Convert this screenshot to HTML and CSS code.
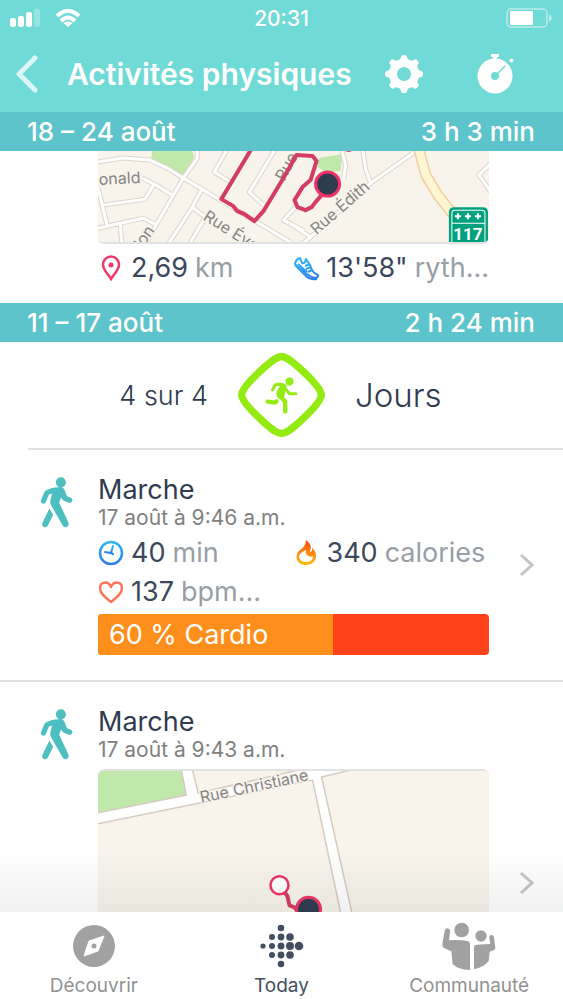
FILE: index.html
```html
<!DOCTYPE html>
<html lang="fr">
<head>
  <meta charset="UTF-8">
  <meta name="viewport" content="width=device-width, initial-scale=1">
  <title>Activités physiques</title>
  <link rel="stylesheet" href="styles.css">
</head>
<body>
  <svg class="defs" width="0" height="0" aria-hidden="true">
    <defs>
      <linearGradient id="blue" x1="0" y1="0" x2="0" y2="1">
        <stop offset="0" stop-color="#2fb4f8"/>
        <stop offset="1" stop-color="#2a7de8"/>
      </linearGradient>
      <linearGradient id="fire" x1="0" y1="0" x2="0" y2="1">
        <stop offset="0" stop-color="#fb4a12"/>
        <stop offset="1" stop-color="#ffbe0a"/>
      </linearGradient>
      <symbol id="walk" viewBox="60 48 98 152">
        <circle cx="122" cy="64" r="15"/>
        <path d="M98 80 L122 78 Q130 79 134 88 L140 105 L152 110 Q159 114 155 121 Q153 126 146 125 L131 119 Q127 117 123 109 L117 124 L144 183 Q148 193 140 197 Q131 200 127 192 L93 132 Q89 125 91 117 L96 97 L86 101 L78 122 Q75 130 67 127 Q60 124 63 116 L73 93 Q76 87 83 85 Z"/>
        <path d="M88 142 L99 161 L84 191 Q80 200 71 197 Q64 193 67 185 Z"/>
      </symbol>
    </defs>
  </svg>

  <header class="header">
    <div class="status">
      <div class="status-left">
        <svg width="30" height="18" viewBox="0 0 30 18" fill="#fff">
          <rect x="0" y="9" width="6" height="9" rx="2"/>
          <rect x="8" y="7" width="6" height="11" rx="2"/>
          <rect x="16" y="3" width="6" height="15" rx="2"/>
          <rect x="24" y="0" width="6" height="18" rx="2" opacity=".25"/>
        </svg>
        <svg width="26" height="18" viewBox="0 0 26 18" fill="none" stroke="#fff" stroke-width="4">
          <path d="M2 7 Q13 -3 24 7"/>
          <path d="M6 12 Q13 5 20 12"/>
          <path d="M13 18 L8.500 14 Q13 10.500 17.500 14 Z" fill="#fff" stroke="none"/>
        </svg>
      </div>
      <span class="time">20:31</span>
      <svg class="battery" width="47" height="20" viewBox="0 0 47 20" fill="none">
        <rect x="1" y="1" width="40" height="18" rx="4" stroke="#fff" stroke-opacity=".5" stroke-width="1.500"/>
        <rect x="4" y="3" width="23" height="14" rx="1" fill="#fff"/>
        <path d="M43 6 Q46 8 46 10 T43 14 Z" fill="#fff" opacity=".5"/>
      </svg>
    </div>
    <nav class="navbar">
      <button class="icon-btn" aria-label="Retour">
        <svg width="22" height="38" viewBox="0 0 22 38" fill="none" stroke="#fff" stroke-opacity=".75" stroke-width="5" stroke-linecap="round" stroke-linejoin="round">
          <path d="M19 3 L3 19 L19 35"/>
        </svg>
      </button>
      <h1>Activités physiques</h1>
      <button class="icon-btn gear" aria-label="Réglages">
        <svg width="38" height="38" viewBox="-19 -19 38 38" fill="none" stroke="#fff">
          <circle r="11" stroke-width="8"/>
          <g fill="#fff" stroke="none">
            <path id="tooth" d="M-6 -13 Q-3 -15 -3 -17 Q-3 -19 0 -19 T3 -17 Q3 -15 6 -13 Z"/>
            <use href="#tooth" transform="rotate(45)"/>
            <use href="#tooth" transform="rotate(90)"/>
            <use href="#tooth" transform="rotate(135)"/>
            <use href="#tooth" transform="rotate(180)"/>
            <use href="#tooth" transform="rotate(225)"/>
            <use href="#tooth" transform="rotate(270)"/>
            <use href="#tooth" transform="rotate(315)"/>
          </g>
        </svg>
      </button>
      <button class="icon-btn" aria-label="Chronomètre">
        <svg width="38" height="40" viewBox="0 0 38 40">
          <circle cx="18" cy="22" r="17.500" fill="#fff"/>
          <path d="M14 0 H22 V3 H20 V6 H16 V3 H14 Z" fill="#fff"/>
          <circle cx="34.500" cy="6.500" r="2" fill="#fff"/>
          <circle cx="18" cy="22" r="4" fill="#70dbd6"/>
          <path d="M18 22 L28 12" stroke="#70dbd6" stroke-width="1.500"/>
        </svg>
      </button>
    </nav>
  </header>

  <main class="feed">
    <h2 class="week"><span>18 – 24 août</span><span>3 h 3 min</span></h2>

    <article class="activity previous">
      <div class="details">
        <svg class="map" viewBox="0 0 390 91">
          <rect width="390" height="93" fill="#f8f4ec"/>
          <path d="M54 0 H94 L96 6 L85 26 L65 16 L53 8 Z M220 7 L244 3 L242 20 L227 21 L219 16 Z" fill="#c0e8ab"/>
          <g fill="none" stroke-linejoin="round">
            <g class="street-edge">
              <path id="streets" d="M0 11 L25 7 L52 9 L69 17 L85 27 L102 37 L122 49 L152 67 L192 91 M99 -2 V7 L85 27 L59 72 L46 95 M0 37 L9 74 M0 77 L45 67 L59 74 M22 72 L24 95 M5 54 L47 48 L56 33 M44 27 L56 33 L74 44 M103 39 L94 56 L70 93 M94 56 L107 66 L90 95 M129 -2 L116 21 L132 31 M177 -2 L151 41 L165 54 M243 -2 L247 14 L245 27 M264 -2 L267 18 L272 32 M320 -2 L272 32 L212 86 L202 94 M190 71 L212 86 M197 56 L185 69 L206 80 M392 12 L380 24 L392 41"/>
            </g>
            <use href="#streets" class="street-inner"/>
            <path d="M320 -2 L327 24 L339 44 L358 68" stroke="#f5cd9c" stroke-width="11"/>
            <path d="M320 -2 L327 24 L339 44 L358 68" stroke="#fff7d2" stroke-width="8"/>
          </g>
          <g class="map-label">
            <text x="1" y="34" transform="rotate(-3 1 34)">onald</text>
            <text x="104" y="68" transform="rotate(32 104 68)">Rue Éve</text>
            <text x="44" y="98" transform="rotate(-55 44 98)">lon</text>
            <text x="186" y="31" transform="rotate(-62 186 31)">Rue B</text>
            <text x="218" y="84" transform="rotate(-41 218 84)">Rue Édith</text>
          </g>
          <path class="route" d="M153 -2 L123 48 L135 55 L139 60 L146 63 L156 70 L165 60 L185 27 L198 4 L214 5 L218 10 L212 29 L204 36 L196 49 L199 56 L207 59 L213 56 L217 51 L229 37"/>
          <circle cx="250" cy="-4" r="5" fill="#ee3368"/>
          <circle class="marker" cx="229" cy="33" r="12"/>
          <g>
            <rect x="350" y="56" width="39" height="48" rx="5" fill="#00a17c"/>
            <path d="M353 104 V62 Q353 59 356 59 H383 Q386 59 386 62 V104 M353 72 H386" fill="none" stroke="#fff"/>
            <path d="M356 65 h6 M359 62 v6 M366 65 h6 M369 62 v6 M376 65 h6 M379 62 v6" stroke="#fff" stroke-width="2"/>
            <text class="shield" x="369" y="89" text-anchor="middle">117</text>
          </g>
        </svg>
        <ul class="stats">
          <li>
            <svg width="26" height="26" viewBox="0 0 26 26" fill="none" stroke="#f0386b" stroke-width="2.500">
              <path d="M13 24 C10 19 5 15 5 9.500 A8 8 0 0 1 21 9.500 C21 15 16 19 13 24 Z"/>
              <circle cx="13" cy="10" r="2.500" fill="#f0386b" stroke="none"/>
            </svg>
            <b>2,69</b> km
          </li>
          <li>
            <svg width="26" height="26" viewBox="0 0 26 26" fill="none" stroke="url(#blue)" stroke-width="2" stroke-linejoin="round">
              <path d="M2 9 Q3 4 7 3 L9 8 Q12 9 13 4 L17 10 Q19 18 25 20 Q25 23 22 23 Q17 22 14 19 L4 11 Z"/>
              <path d="M2 10 L13 21 Q17 25 24 24 M12 11 L17 9 M13 14 L18 12 M15 17 L19 15 M5 9 L14 17"/>
            </svg>
            <b>13'58"</b> ryth...
          </li>
        </ul>
      </div>
    </article>

    <h2 class="week"><span>11 – 17 août</span><span>2 h 24 min</span></h2>

    <div class="goal">
      <span class="goal-count">4 sur 4</span>
      <svg width="87" height="86" viewBox="415 37 260 254" fill="none" stroke="#93eb12" stroke-linecap="round" stroke-linejoin="round">
        <path stroke-width="22" d="M545 49 C557 49 570 58 597 82 C640 121 664 148 664 164 C664 180 640 207 597 246 C570 270 557 279 545 279 C533 279 520 270 493 246 C450 207 426 180 426 164 C426 148 450 121 493 82 C520 58 533 49 545 49 Z"/>
        <circle cx="569" cy="124" r="12" fill="#93eb12" stroke="none"/>
        <path d="M540 129 L558 136 L554 152 L550 171 L535 171 L532 158 L543 137 Z" fill="#93eb12" stroke-width="5"/>
        <path stroke-width="9" d="M518 149 Q525 133 532 132 L548 133 M557 146 L569 160 H588"/>
        <path stroke-width="13" d="M539 167 L556 183 V213 M504 184 L524 187 L530 183"/>
      </svg>
      <span class="goal-unit">Jours</span>
    </div>

    <article class="activity">
      <svg class="walk" width="33" height="51"><use href="#walk"/></svg>
      <div class="details">
        <h3>Marche</h3>
        <time>17 août à 9:46 a.m.</time>
        <ul class="stats">
          <li>
            <svg width="26" height="26" viewBox="0 0 26 26" fill="none" stroke="url(#blue)" stroke-width="2.500">
              <circle cx="13" cy="13" r="11"/>
              <path d="M15 6 L13 13 L7 12 M13 13 L15 14" stroke-width="2" stroke-linecap="round"/>
            </svg>
            <b>40</b> min
          </li>
          <li>
            <svg width="26" height="26" viewBox="0 0 26 26">
              <path fill="url(#fire)" fill-rule="evenodd" d="M12 0 C17 4 18 7 16 11 Q16 13 17 12 Q19 10 18 8 C25 13 23 25 12 25 C2 25 0 15 6 10 Q12 6 12 0 Z M12 10 Q5 13 5 17 Q6 22 12 22 Q19 22 19 16 Q16 18 13 15 Q11 13 12 10 Z"/>
            </svg>
            <b>340</b> calories
          </li>
          <li>
            <svg width="26" height="26" viewBox="0 0 26 26" fill="none" stroke="#ff7358" stroke-width="2.500" stroke-linejoin="round">
              <path d="M13 23 C8 19 2 15 2 9 C2 3 10 1 13 8 C16 1 24 3 24 9 C24 15 18 19 13 23 Z"/>
            </svg>
            <b>137</b> bpm...
          </li>
        </ul>
        <div class="zones"><span class="cardio" style="width: 60%">60 % Cardio</span></div>
      </div>
      <svg class="chevron" width="16" height="24" viewBox="0 0 16 24"><path d="M3 2 L14 12 L3 22"/></svg>
    </article>

    <article class="activity">
      <svg class="walk" width="33" height="51"><use href="#walk"/></svg>
      <div class="details with-map">
        <h3>Marche</h3>
        <time>17 août à 9:43 a.m.</time>
        <svg class="map" viewBox="0 0 390 250">
          <rect width="390" height="250" fill="#fff"/>
          <g fill="#f8f4ec" stroke="#d5cbc0" stroke-width="1.500">
            <path d="M-2 42 L88 24 L83 -2 H-2 Z" fill="#c0e8ab"/>
            <path d="M94 -2 L100 22 L205 -2 Z"/>
            <path d="M-2 53 L214 9 L265 250 H-2 Z"/>
            <path d="M223 6 L257 -2 H392 V252 H278 Z"/>
          </g>
          <g class="map-label">
            <text x="103" y="32" transform="rotate(-12 103 32)">Rue Christiane</text>
          </g>
          <path class="route" d="M186 121 L189 125 L191 134 L196 136 L200 141 L210 141"/>
          <circle cx="181" cy="114" r="9" fill="#fff" stroke="#ee3368" stroke-width="2.500"/>
          <circle class="marker" cx="210" cy="138" r="12"/>
        </svg>
      </div>
      <svg class="chevron" width="16" height="24" viewBox="0 0 16 24"><path d="M3 2 L14 12 L3 22"/></svg>
    </article>
  </main>

  <nav class="tabs">
    <a href="#decouvrir">
      <svg width="58" height="50" viewBox="-29 -25 58 50">
        <circle r="21" fill="#a1a1a1"/>
        <path d="M10 -10 L4 5 L-10 10 L-5 -5 Z" fill="#fff" stroke="#fff" stroke-linejoin="round"/>
        <circle r="2.500" fill="#a1a1a1"/>
      </svg>
      Découvrir
    </a>
    <a href="#today" class="active">
      <svg width="58" height="50" viewBox="-29 -25 58 50" fill="#434e61">
        <circle cx="-18" cy="0" r="2.600"/>
        <circle cx="-9" cy="-9" r="3"/><circle cx="-9" cy="0" r="3"/><circle cx="-9" cy="9" r="3"/>
        <circle cx="0" cy="-18" r="3.300"/><circle cx="0" cy="-9" r="3.400"/><circle cx="0" cy="0" r="3.500"/><circle cx="0" cy="9" r="3.400"/><circle cx="0" cy="18" r="3.300"/>
        <circle cx="9" cy="-9" r="3.800"/><circle cx="9" cy="0" r="4"/><circle cx="9" cy="9" r="3.800"/>
        <circle cx="18" cy="0" r="4.300"/>
      </svg>
      Today
    </a>
    <a href="#communaute">
      <svg width="58" height="50" viewBox="450 33 174 150" fill="#a1a1a1">
        <circle cx="515" cy="60" r="22"/>
        <circle cx="573" cy="78" r="17"/>
        <path d="M464 62 Q466 54 474 55 Q481 57 480 64 L477 91 Q510 89 533 93 Q540 95 540 102 V180 Q508 180 488 163 L484 124 L463 115 Q456 112 457 103 Z"/>
        <path d="M552 178 V112 Q552 105 560 104 L601 102 L598 84 Q597 76 604 75 Q611 75 612 82 L616 113 Q616 119 610 121 L599 125 L596 153 Q582 172 552 178 Z"/>
      </svg>
      Communauté
    </a>
  </nav>
</body>
</html>
```

FILE: styles.css
```css
* {
  box-sizing: border-box;
}

body {
  margin: 0;
  height: 100vh;
  display: flex;
  flex-direction: column;
  background: #fff;
  color: #2f3b4f;
  font-family: Inter, "Noto Sans", sans-serif;
  overflow: hidden;
}

svg {
  display: block;
  flex-shrink: 0;
}

.defs {
  position: absolute;
}

h1, h2, h3, ul {
  margin: 0;
  padding: 0;
  font-weight: 400;
}

/* header */
.header {
  background: #70dbd6;
  color: #fff;
}

.status {
  height: 36px;
  padding: 0 10px;
  display: grid;
  grid-template-columns: 1fr auto 1fr;
  align-items: center;
}

.status-left {
  display: flex;
  gap: 15px;
}

.time {
  font-size: 21px;
  font-weight: 500;
}

.battery {
  justify-self: end;
}

.navbar {
  height: 76px;
  padding: 0 48px 0 16px;
  display: flex;
  align-items: center;
}

.navbar h1 {
  flex: 1;
  padding-left: 29px;
  font-size: 30px;
  font-weight: 600;
  white-space: nowrap;
}

.icon-btn {
  padding: 0;
  border: 0;
  background: none;
}

.gear {
  margin-right: 54px;
}

/* feed */
.feed {
  flex: 1;
  min-height: 0;
  overflow: hidden;
}

.week {
  height: 39px;
  padding: 0 28px 0 27px;
  display: flex;
  justify-content: space-between;
  align-items: center;
  background: #5dc4cb;
  color: #fff;
  font-size: 26px;
  font-weight: 500;
}

.activity {
  display: grid;
  grid-template-columns: 98px minmax(0, 1fr) 74px;
  padding: 24px 0 25px;
  border-bottom: 2px solid #e0e0e0;
}

.activity.previous {
  padding: 0;
  border: 0;
}

.previous .details {
  grid-column: 2;
}

.previous .map {
  border-radius: 0 0 6px 6px;
  border-bottom: 2px solid #e2e2e4;
}

.previous .stats {
  margin: 4px 0 16px;
}

.walk {
  margin: 3px 0 0 40px;
  fill: #4dbfc0;
}

.activity h3 {
  font-size: 27px;
  line-height: 32px;
}

.activity time {
  display: block;
  color: #808080;
  font-size: 21px;
  line-height: 24px;
}

.stats {
  margin: 3px 0;
  display: grid;
  grid-template-columns: 1fr 1fr;
  list-style: none;
}

.stats li {
  display: flex;
  align-items: center;
  gap: 7px;
  height: 39px;
  color: #989ea6;
  font-size: 27px;
  white-space: nowrap;
}

.stats b {
  color: #3b475b;
  font-weight: 400;
}

.zones {
  height: 41px;
  border-radius: 4px;
  background: #ff421a;
  overflow: hidden;
}

.cardio {
  display: block;
  padding-left: 11px;
  background: #ff8f1c;
  color: #fff;
  font-size: 27px;
  line-height: 41px;
}

.chevron {
  align-self: center;
  justify-self: center;
  fill: none;
  stroke: #c4c4c8;
  stroke-width: 3;
}

.goal {
  height: 108px;
  margin-left: 28px;
  padding-right: 28px;
  display: grid;
  grid-template-columns: 1fr auto 1fr;
  align-items: center;
  gap: 30px;
  border-bottom: 2px solid #e0e0e0;
  font-weight: 300;
}

.goal-count {
  justify-self: end;
  font-size: 27px;
}

.goal-unit {
  font-size: 33px;
}

/* maps */
.map {
  width: 100%;
  height: auto;
}

.with-map {
  padding-bottom: 38px;
}

.with-map .map {
  margin-top: 7px;
  border-top: 2px solid #e2e2e4;
  border-radius: 6px;
}

.street-edge {
  stroke: #dcd5cc;
  stroke-width: 5;
}

.street-inner {
  stroke: #fff;
  stroke-width: 3;
}

.map-label {
  fill: #858585;
  stroke: #f8f4ec;
  stroke-width: 3px;
  paint-order: stroke;
  font-size: 16px;
}

.shield {
  fill: #fff;
  font-family: Roboto, sans-serif;
  font-size: 17px;
  font-weight: 700;
}

.route {
  fill: none;
  stroke: #d53c63;
  stroke-width: 4;
  stroke-linejoin: round;
}

.marker {
  fill: #2f3b4f;
  stroke: #ee3368;
  stroke-width: 3;
}

/* bottom tabs */
.tabs {
  position: relative;
  height: 87px;
  padding-top: 9px;
  display: grid;
  grid-template-columns: repeat(3, 1fr);
  background: #fff;
}

/* shade over the end of the feed */
.tabs::before {
  content: "";
  position: absolute;
  left: 0;
  right: 0;
  bottom: 100%;
  height: 64px;
  background: linear-gradient(rgba(40, 50, 50, 0), rgba(40, 50, 50, .07));
}

.tabs a {
  display: flex;
  flex-direction: column;
  align-items: center;
  gap: 3px;
  color: #929292;
  font-size: 19px;
  line-height: 24px;
  text-decoration: none;
}

.tabs .active {
  color: #434e61;
}
```
